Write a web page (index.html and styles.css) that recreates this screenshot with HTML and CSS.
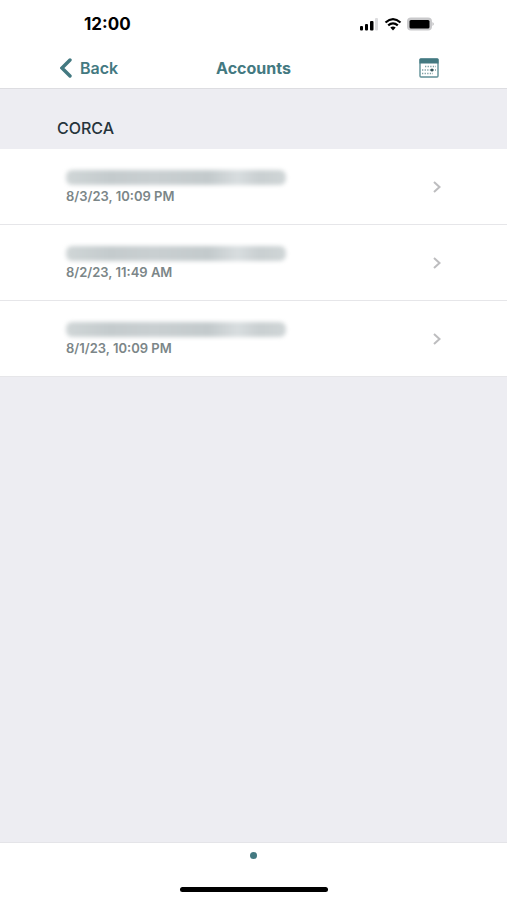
FILE: index.html
```html
<!DOCTYPE html>
<html lang="en">
<head>
<meta charset="utf-8">
<meta name="viewport" content="width=device-width, initial-scale=1">
<title>Accounts</title>
<link rel="stylesheet" href="styles.css">
</head>
<body>
<div class="status">
  <time class="clock">12:00</time>
  <svg class="status-icons" width="76" height="16" viewBox="0 0 76 16" aria-hidden="true">
    <rect x="1" y="10" width="3" height="4.500" rx="1"/>
    <rect x="6" y="8" width="3" height="6.500" rx="1"/>
    <rect x="11" y="5" width="3.500" height="9.500" rx="1"/>
    <rect x="16" y="2" width="3" height="12.500" rx="1" fill="#dcdcde"/>
    <g fill="none" stroke="#000" stroke-width="2.200">
      <path d="M26.500 6.500Q34 -0.300 41.500 6.500"/>
      <path d="M29.200 9.400Q34 5.200 38.800 9.400"/>
    </g>
    <path d="M31.300 11.600Q34 9.400 36.700 11.600L34 14.500Z"/>
    <rect x="48" y="1.500" width="25" height="13" rx="4" fill="#c9c9cb"/>
    <rect x="50.500" y="4" width="20" height="8.500" rx="1.500"/>
    <path d="M73.500 6Q76 8 73.500 10Z" fill="#b4b4b6"/>
  </svg>
</div>
<header class="nav">
  <button class="back" type="button">
    <svg width="12" height="20" viewBox="0 0 12 20" aria-hidden="true"><path d="M10 2L2 10L10 18" fill="none" stroke="currentColor" stroke-width="3.400" stroke-linecap="round"/></svg>
    <span>Back</span>
  </button>
  <h1 class="title">Accounts</h1>
  <button class="calendar" type="button" aria-label="Calendar">
    <svg width="20" height="20" viewBox="0 0 20 20" aria-hidden="true">
      <rect x="1" y="1" width="18" height="18" rx="1" fill="#fff" stroke="#5f8f96" stroke-width="1.400"/>
      <path d="M.500 1.500Q.500.500 1.500.500H18.500Q19.500.500 19.500 1.500V5.500H.500Z" fill="#437981"/>
      <path d="M6 8.500H17M3 12H17M3 15.500H14" fill="none" stroke="#7f9fa4" stroke-width="1.300" stroke-dasharray="1.300 1.300"/>
      <circle cx="13" cy="12" r="1.500" fill="#35545a"/>
    </svg>
  </button>
</header>
<main class="content">
  <h2 class="section">CORCA</h2>
  <ul class="list">
    <li><a class="row" href="#aug3">
      <span class="entry"><span class="redacted"></span><time>8/3/23, 10:09 PM</time></span>
      <svg class="chevron" width="8" height="12" viewBox="0 0 8 12" aria-hidden="true"><path d="M1 1L6.500 6L1 11"/></svg>
    </a></li>
    <li><a class="row" href="#aug2">
      <span class="entry"><span class="redacted"></span><time>8/2/23, 11:49 AM</time></span>
      <svg class="chevron" width="8" height="12" viewBox="0 0 8 12" aria-hidden="true"><path d="M1 1L6.500 6L1 11"/></svg>
    </a></li>
    <li><a class="row" href="#aug1">
      <span class="entry"><span class="redacted"></span><time>8/1/23, 10:09 PM</time></span>
      <svg class="chevron" width="8" height="12" viewBox="0 0 8 12" aria-hidden="true"><path d="M1 1L6.500 6L1 11"/></svg>
    </a></li>
  </ul>
</main>
<footer class="footer">
  <span class="page-dot"></span>
  <span class="home-bar"></span>
</footer>
</body>
</html>
```
FILE: styles.css
```css
* {
  box-sizing: border-box;
}

body {
  margin: 0;
  min-height: 100vh;
  display: flex;
  flex-direction: column;
  background: #fff;
  color: #26343c;
  font-family: Inter, "Liberation Sans", sans-serif;
}

.status {
  display: flex;
  align-items: center;
  justify-content: space-between;
  height: 48px;
  padding: 0 72px 0 84px;
}

.clock {
  color: #000;
  font-size: 17px;
  font-weight: 700;
}

.nav {
  display: grid;
  grid-template-columns: 1fr auto 1fr;
  align-items: center;
  height: 40px;
  padding: 0 60px;
  color: #437981;
}

.nav button {
  display: flex;
  align-items: center;
  padding: 0;
  border: 0;
  background: none;
  color: inherit;
  font: inherit;
}

.nav .back {
  justify-self: start;
  gap: 8px;
  font-size: 16px;
  font-weight: 600;
}

.title {
  margin: 0;
  font-size: 16px;
  font-weight: 700;
}

.calendar {
  justify-self: end;
  margin-right: 8px;
}

.content {
  flex: 1;
  border-top: 1px solid #dddde1;
  border-bottom: 1px solid #e4e4e8;
  background: #ededf2;
}

.section {
  margin: 0;
  padding: 29px 57px 11px;
  font-size: 16px;
  line-height: 20px;
  font-weight: 500;
}

.list {
  margin: 0;
  padding: 0;
  list-style: none;
  background: #fff;
}

.list li {
  border-bottom: 1px solid #e6e6e9;
}

.row {
  display: flex;
  align-items: center;
  justify-content: space-between;
  height: 75px;
  padding: 0 66px;
  color: #7b8688;
  text-decoration: none;
}

.entry {
  display: flex;
  flex-direction: column;
  gap: 2px;
  padding-top: 1px;
  font-size: 13px;
  line-height: 18px;
  font-weight: 600;
}

.redacted {
  width: 220px;
  height: 15px;
  border-radius: 6px;
  background: linear-gradient(90deg, #d0d6d7, #c4cbcd 20%, #c9cfd1 40%, #c3cacc 65%, #d8dddf 78%, #c9cfd1 88%, #d0d6d7);
  filter: blur(2px);
}

.chevron {
  fill: none;
  stroke: #bdbdbf;
  stroke-width: 2;
}

.footer {
  display: flex;
  flex-direction: column;
  align-items: center;
  gap: 28px;
  padding: 9px 0 8px;
}

.page-dot {
  width: 7px;
  height: 7px;
  border-radius: 50%;
  background: #437981;
}

.home-bar {
  width: 148px;
  height: 5px;
  border-radius: 3px;
  background: #000;
}
```
